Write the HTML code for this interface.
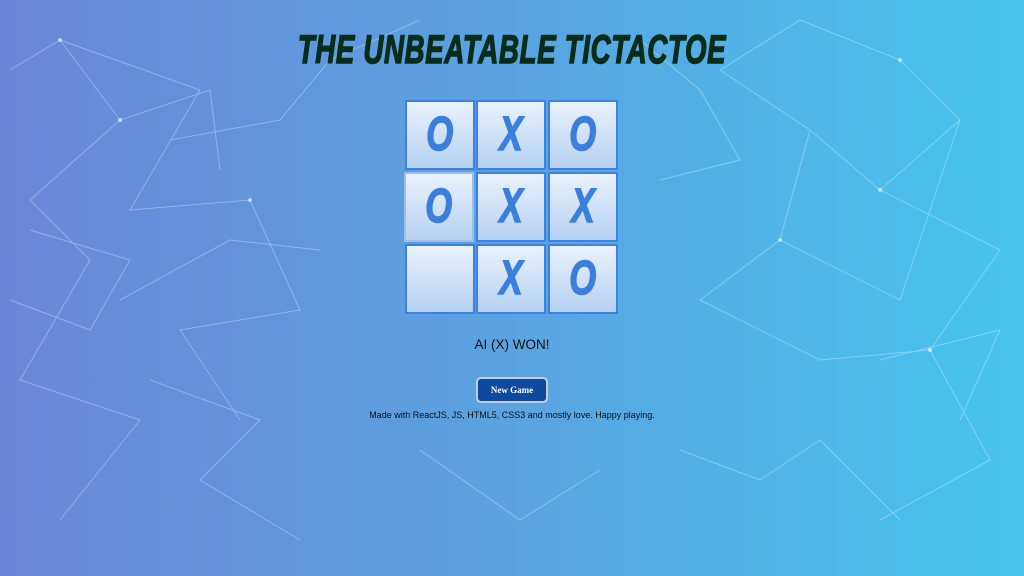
<!DOCTYPE html>
<html><head><meta charset="utf-8"><style>
html,body{margin:0;width:1024px;height:576px;overflow:hidden}
body{background:linear-gradient(90deg,#6b86d8 0%,#5aa3e0 50%,#48c5ef 100%);font-family:"Liberation Sans",sans-serif;position:relative}
svg.bg{position:absolute;left:0;top:0}
h1{position:absolute;left:0;width:1024px;top:28px;margin:0;text-align:center;font-size:40px;font-weight:bold;font-style:italic;color:#082c1a;letter-spacing:1px;transform:scaleX(0.69);-webkit-text-stroke:1.5px #082c1a}
.grid{position:absolute;left:404px;top:99px;width:216px;height:217px}
.c{position:absolute;width:66px;height:66px;border:2px solid #3d80e0;background:linear-gradient(#eaf2fd,#b5d0f0);font:italic bold 48px "Liberation Sans",sans-serif;color:#3a7fdc;text-align:center;line-height:66px}
.c span{display:inline-block;transform:scaleX(0.72);-webkit-text-stroke:1.5px #3a7fdc}
.st{position:absolute;left:0;width:1024px;top:337px;text-align:center;font-size:13.5px;color:#111}
.btn{position:absolute;left:476px;top:377px;width:68px;height:22px;border:2px solid #c8ccd8;border-radius:5px;background:#0c4aa0;color:#fff;font:bold 9px "Liberation Serif",serif;text-align:center;line-height:22px}
.ft{position:absolute;left:0;width:1024px;top:410px;text-align:center;font-size:9px;color:#111}
</style></head><body>
<svg class="bg" width="1024" height="576" stroke="#fff" stroke-opacity=".3" stroke-width="1" fill="none">
<path d="M10 70 L60 40 L120 120 L30 200 L90 260 L20 380 L140 420 L60 520 M60 40 L200 90 L130 210 L250 200 L300 310 L180 330 L240 420 M120 120 L210 90 L220 170 M800 20 L900 60 L960 120 L880 190 L1000 250 L930 350 L990 460 L880 520 M800 20 L720 70 L810 130 L880 190 M810 130 L780 240 L900 300 L960 120 M780 240 L700 300 L820 360 L930 350 M680 450 L760 480 L820 440 L900 520 M150 380 L260 420 L200 480 L300 540 M420 450 L520 520 L600 470 M30 230 L130 260 L90 330 L10 300 M170 140 L280 120 L330 60 L420 20 M640 40 L700 90 L740 160 L660 180 M880 360 L1000 330 L960 420 M120 300 L230 240 L320 250"/>
<g fill="#fff" fill-opacity=".6" stroke="none"><circle cx="60" cy="40" r="2"/><circle cx="120" cy="120" r="2"/><circle cx="900" cy="60" r="2"/><circle cx="880" cy="190" r="2"/><circle cx="780" cy="240" r="2"/><circle cx="930" cy="350" r="2"/><circle cx="250" cy="200" r="2"/></g>
</svg>
<h1>THE UNBEATABLE TICTACTOE</h1>
<div class="grid">
<div class="c" style="left:1px;top:1px"><span>O</span></div>
<div class="c" style="left:72px;top:1px"><span>X</span></div>
<div class="c" style="left:144px;top:1px"><span>O</span></div>
<div class="c" style="left:0px;top:73px;border-color:#9cc0ec"><span>O</span></div>
<div class="c" style="left:72px;top:73px"><span>X</span></div>
<div class="c" style="left:144px;top:73px"><span>X</span></div>
<div class="c" style="left:1px;top:145px"></div>
<div class="c" style="left:72px;top:145px"><span>X</span></div>
<div class="c" style="left:144px;top:145px"><span>O</span></div>
</div>
<div class="st">AI (X) WON!</div>
<div class="btn">New Game</div>
<div class="ft">Made with ReactJS, JS, HTML5, CSS3 and mostly love. Happy playing.</div>
</body></html>
